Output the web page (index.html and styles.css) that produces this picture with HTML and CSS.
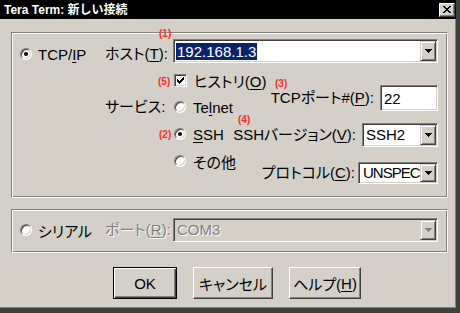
FILE: index.html
```html
<!DOCTYPE html>
<html lang="ja">
<head>
<meta charset="utf-8">
<title>Tera Term: 新しい接続</title>
<link rel="stylesheet" href="styles.css">
</head>
<body>
<div class="window">
  <div class="titlebar">
    <span class="title">Tera Term: 新しい接続</span>
    <span class="close"><svg width="8" height="7" viewBox="0 0 8 7" shape-rendering="crispEdges"><path d="M0 0h2v1h1v1h2v-1h1v-1h2v1h-1v1h-1v1h-1v1h1v1h1v1h1v1h-2v-1h-1v-1h-2v1h-1v1h-2v-1h1v-1h1v-1h1v-1h-1v-1h-1v-1h-1z" fill="#000"/></svg></span>
  </div>
  <div class="content">
    <div class="group group-tcp">
      <div class="radio-line row1"><span class="radio on"></span><span>TCP/<u>I</u>P</span></div>
      <div class="lbl row1">ホスト(<u>T</u>):</div>
      <div class="combo host-combo">
        <span class="value"><span class="sel">192.168.1.3</span></span>
        <span class="drop"><svg width="7" height="4" viewBox="0 0 7 4" shape-rendering="crispEdges"><path d="M0 0h7v1h-1v1h-1v1h-1v1h-1v-1h-1v-1h-1v-1h-1z"/></svg></span>
      </div>
      <div class="lbl service-lbl">サービス:</div>
      <div class="opts">
        <div class="opt-col">
          <div class="opt"><span class="check"><svg width="7" height="7" viewBox="0 0 7 7" shape-rendering="crispEdges"><path d="M6 0h1v1h-1zM5 1h2v1h-2zM0 2h1v1h-1zM4 2h3v1h-3zM0 3h2v1h-2zM3 3h3v1h-3zM0 4h5v1h-5zM1 5h3v1h-3zM2 6h1v1h-1z"/></svg></span><span>ヒストリ(<u>O</u>)</span></div>
          <div class="opt"><span class="radio"></span><span>Te<u>l</u>net</span></div>
          <div class="opt"><span class="radio on"></span><span><u>S</u>SH</span></div>
          <div class="opt"><span class="radio"></span><span>その他</span></div>
        </div>
        <div class="field-col">
          <div class="frow port-row"><span class="lbl">TCPポート#(<u>P</u>):</span><span class="edit port">22</span></div>
          <div class="frow ver-row"><span class="lbl">SSHバージョン(<u>V</u>):</span><span class="combo ver-combo"><span class="value">SSH2</span><span class="drop"><svg width="7" height="4" viewBox="0 0 7 4" shape-rendering="crispEdges"><path d="M0 0h7v1h-1v1h-1v1h-1v1h-1v-1h-1v-1h-1v-1h-1z"/></svg></span></span></div>
          <div class="frow proto-row"><span class="lbl">プロトコル(<u>C</u>):</span><span class="combo proto-combo"><span class="value tight">UNSPEC</span><span class="drop"><svg width="7" height="4" viewBox="0 0 7 4" shape-rendering="crispEdges"><path d="M0 0h7v1h-1v1h-1v1h-1v1h-1v-1h-1v-1h-1v-1h-1z"/></svg></span></span></div>
        </div>
      </div>
    </div>
    <div class="group group-serial">
      <div class="radio-line"><span class="radio"></span><span>シリアル</span></div>
      <div class="lbl disabled">ポート(<u>R</u>):</div>
      <div class="combo disabled-combo">
        <span class="value disabled">COM3</span>
        <span class="drop"><svg width="7" height="4" viewBox="0 0 7 4" shape-rendering="crispEdges"><path d="M0 0h7v1h-1v1h-1v1h-1v1h-1v-1h-1v-1h-1v-1h-1z" fill="#808080"/></svg></span>
      </div>
    </div>
    <div class="buttons">
      <span class="btn default ok">OK</span>
      <span class="btn cancel">キャンセル</span>
      <span class="btn help">ヘルプ(<u>H</u>)</span>
    </div>
  </div>
  <span class="note n1">(1)</span>
  <span class="note n5">(5)</span>
  <span class="note n3">(3)</span>
  <span class="note n4">(4)</span>
  <span class="note n2">(2)</span>
</div>
</body>
</html>
```

FILE: styles.css
```css
* { box-sizing: border-box; }
html, body { margin: 0; padding: 0; }
body {
  width: 460px;
  height: 313px;
  overflow: hidden;
  background: #404040;
  font-family: "Liberation Sans", "Noto Sans CJK JP", sans-serif;
  font-size: 15px;
  font-feature-settings: "palt";
  color: #000;
}
u { text-underline-offset: 2px; }

.window {
  position: relative;
  width: 460px;
  height: 313px;
  background: #d4d0c8;
  border-right: 4px solid #404040;
  border-bottom: 5px solid #404040;
  box-shadow: inset -1px -1px #808080;
  display: flex;
  flex-direction: column;
}

.titlebar {
  height: 19px;
  background: #000;
  color: #fff;
  display: flex;
  align-items: center;
  padding-left: 4px;
  padding-right: 1px;
}
.title { font-weight: bold; font-size: 12px; line-height: 14px; font-feature-settings: normal; }
.close {
  margin-left: auto;
  width: 16px;
  height: 14px;
  background: #d4d0c8;
  border: 1px solid;
  border-color: #fff #404040 #404040 #fff;
  box-shadow: inset -1px -1px #808080;
  display: flex;
  align-items: center;
  justify-content: center;
}

.content { padding: 13px 0 0 11px; display: flex; flex-direction: column; }

.group {
  width: 437px;
  border: 1px solid;
  border-color: #808080 #fff #fff #808080;
  box-shadow: inset 1px 1px #fff, inset -1px -1px #808080;
  display: grid;
  grid-template-columns: 84px 68px 265px;
  padding: 6px 9px 0 9px;
  align-content: start;
  align-items: start;
}
.group-tcp { height: 166px; }
.group-serial { height: 44px; margin-top: 11px; padding-top: 8px; align-items: center; }

.lbl { line-height: 16px; white-space: nowrap; }
.row1 { margin-top: 7px; }
.disabled { color: #808080; text-shadow: 1px 1px 0 #fff; }

.radio-line { display: flex; align-items: center; gap: 6px; height: 16px; margin-left: -1px; white-space: nowrap; }

.radio {
  position: relative;
  flex: none;
  width: 12px;
  height: 12px;
  border-radius: 50%;
  background: #fff;
  border: 1px solid;
  border-color: #808080 #fff #fff #808080;
  box-shadow: inset 1px 1px #404040, inset -1px -1px #d4d0c8;
}
.radio.on::after {
  content: "";
  position: absolute;
  left: 3px;
  top: 3px;
  width: 4px;
  height: 4px;
  border-radius: 50%;
  background: #000;
}
.check {
  flex: none;
  width: 13px;
  height: 13px;
  background: #fff;
  border: 1px solid;
  border-color: #808080 #fff #fff #808080;
  box-shadow: inset 1px 1px #404040, inset -1px -1px #d4d0c8;
  display: flex;
  align-items: center;
  justify-content: center;
}

.combo {
  display: flex;
  height: 24px;
  background: #fff;
  border: 1px solid;
  border-color: #808080 #fff #fff #808080;
  box-shadow: inset 1px 1px #404040, inset -1px -1px #d4d0c8;
  padding: 1px;
}
.value {
  flex: 1;
  display: flex;
  align-items: center;
  padding-left: 2px;
  overflow: hidden;
  white-space: nowrap;
  line-height: 16px;
}
.value.tight { letter-spacing: -1px; padding-left: 3px; }
.host-combo .value { padding-left: 1px; }
.sel { background: #0a246a; color: #fff; padding: 0 1px; line-height: 17px; }
.drop {
  flex: none;
  width: 16px;
  background: #d4d0c8;
  border: 1px solid;
  border-color: #d4d0c8 #404040 #404040 #d4d0c8;
  box-shadow: inset 1px 1px #fff, inset -1px -1px #808080;
  display: flex;
  align-items: center;
  justify-content: center;
}
.disabled-combo { background: #d4d0c8; }

.service-lbl { grid-column: 2; margin-top: 36px; }
.opts {
  grid-column: 3;
  display: grid;
  grid-template-columns: 60px 205px;
}
.opt-col { display: flex; flex-direction: column; gap: 11px; padding-top: 9px; padding-left: 1px; }
.opt { display: flex; align-items: center; gap: 5px; height: 16px; white-space: nowrap; }
.opt .check { margin-right: 2px; }
.opt .radio { margin-right: 2px; }

.field-col { display: flex; flex-direction: column; align-items: flex-end; padding-top: 22px; }
.frow { display: flex; align-items: center; gap: 6px; }
.edit {
  display: flex;
  align-items: center;
  background: #fff;
  border: 1px solid;
  border-color: #808080 #fff #fff #808080;
  box-shadow: inset 1px 1px #404040, inset -1px -1px #d4d0c8;
  padding: 0 3px;
}
.port { width: 58px; height: 26px; }
.ver-row { margin-top: 12px; }
.ver-combo { width: 76px; height: 24px; }
.proto-row { margin-top: 15px; gap: 3px; }
.proto-combo { width: 80px; height: 22px; }

.buttons { display: flex; gap: 16px; margin-top: 14px; padding-left: 102px; }
.btn {
  height: 32px;
  display: flex;
  align-items: center;
  justify-content: center;
  border: 1px solid;
  border-color: #fff #404040 #404040 #fff;
  box-shadow: inset -1px -1px #808080, inset 1px 1px #d4d0c8;
  white-space: nowrap;
}
.btn.default {
  border-color: #000;
  box-shadow: inset 1px 1px #fff, inset -1px -1px #404040, inset -2px -2px #808080;
}
.ok { width: 64px; }
.cancel { width: 80px; }
.help { width: 72px; }

.note {
  position: absolute;
  color: #ff2a2a;
  font-weight: bold;
  font-size: 10px;
  line-height: 11px;
}
.n1 { left: 159px; top: 28px; }
.n5 { left: 158px; top: 76px; }
.n3 { left: 275px; top: 78px; }
.n4 { left: 238px; top: 114px; }
.n2 { left: 159px; top: 129px; }
```
